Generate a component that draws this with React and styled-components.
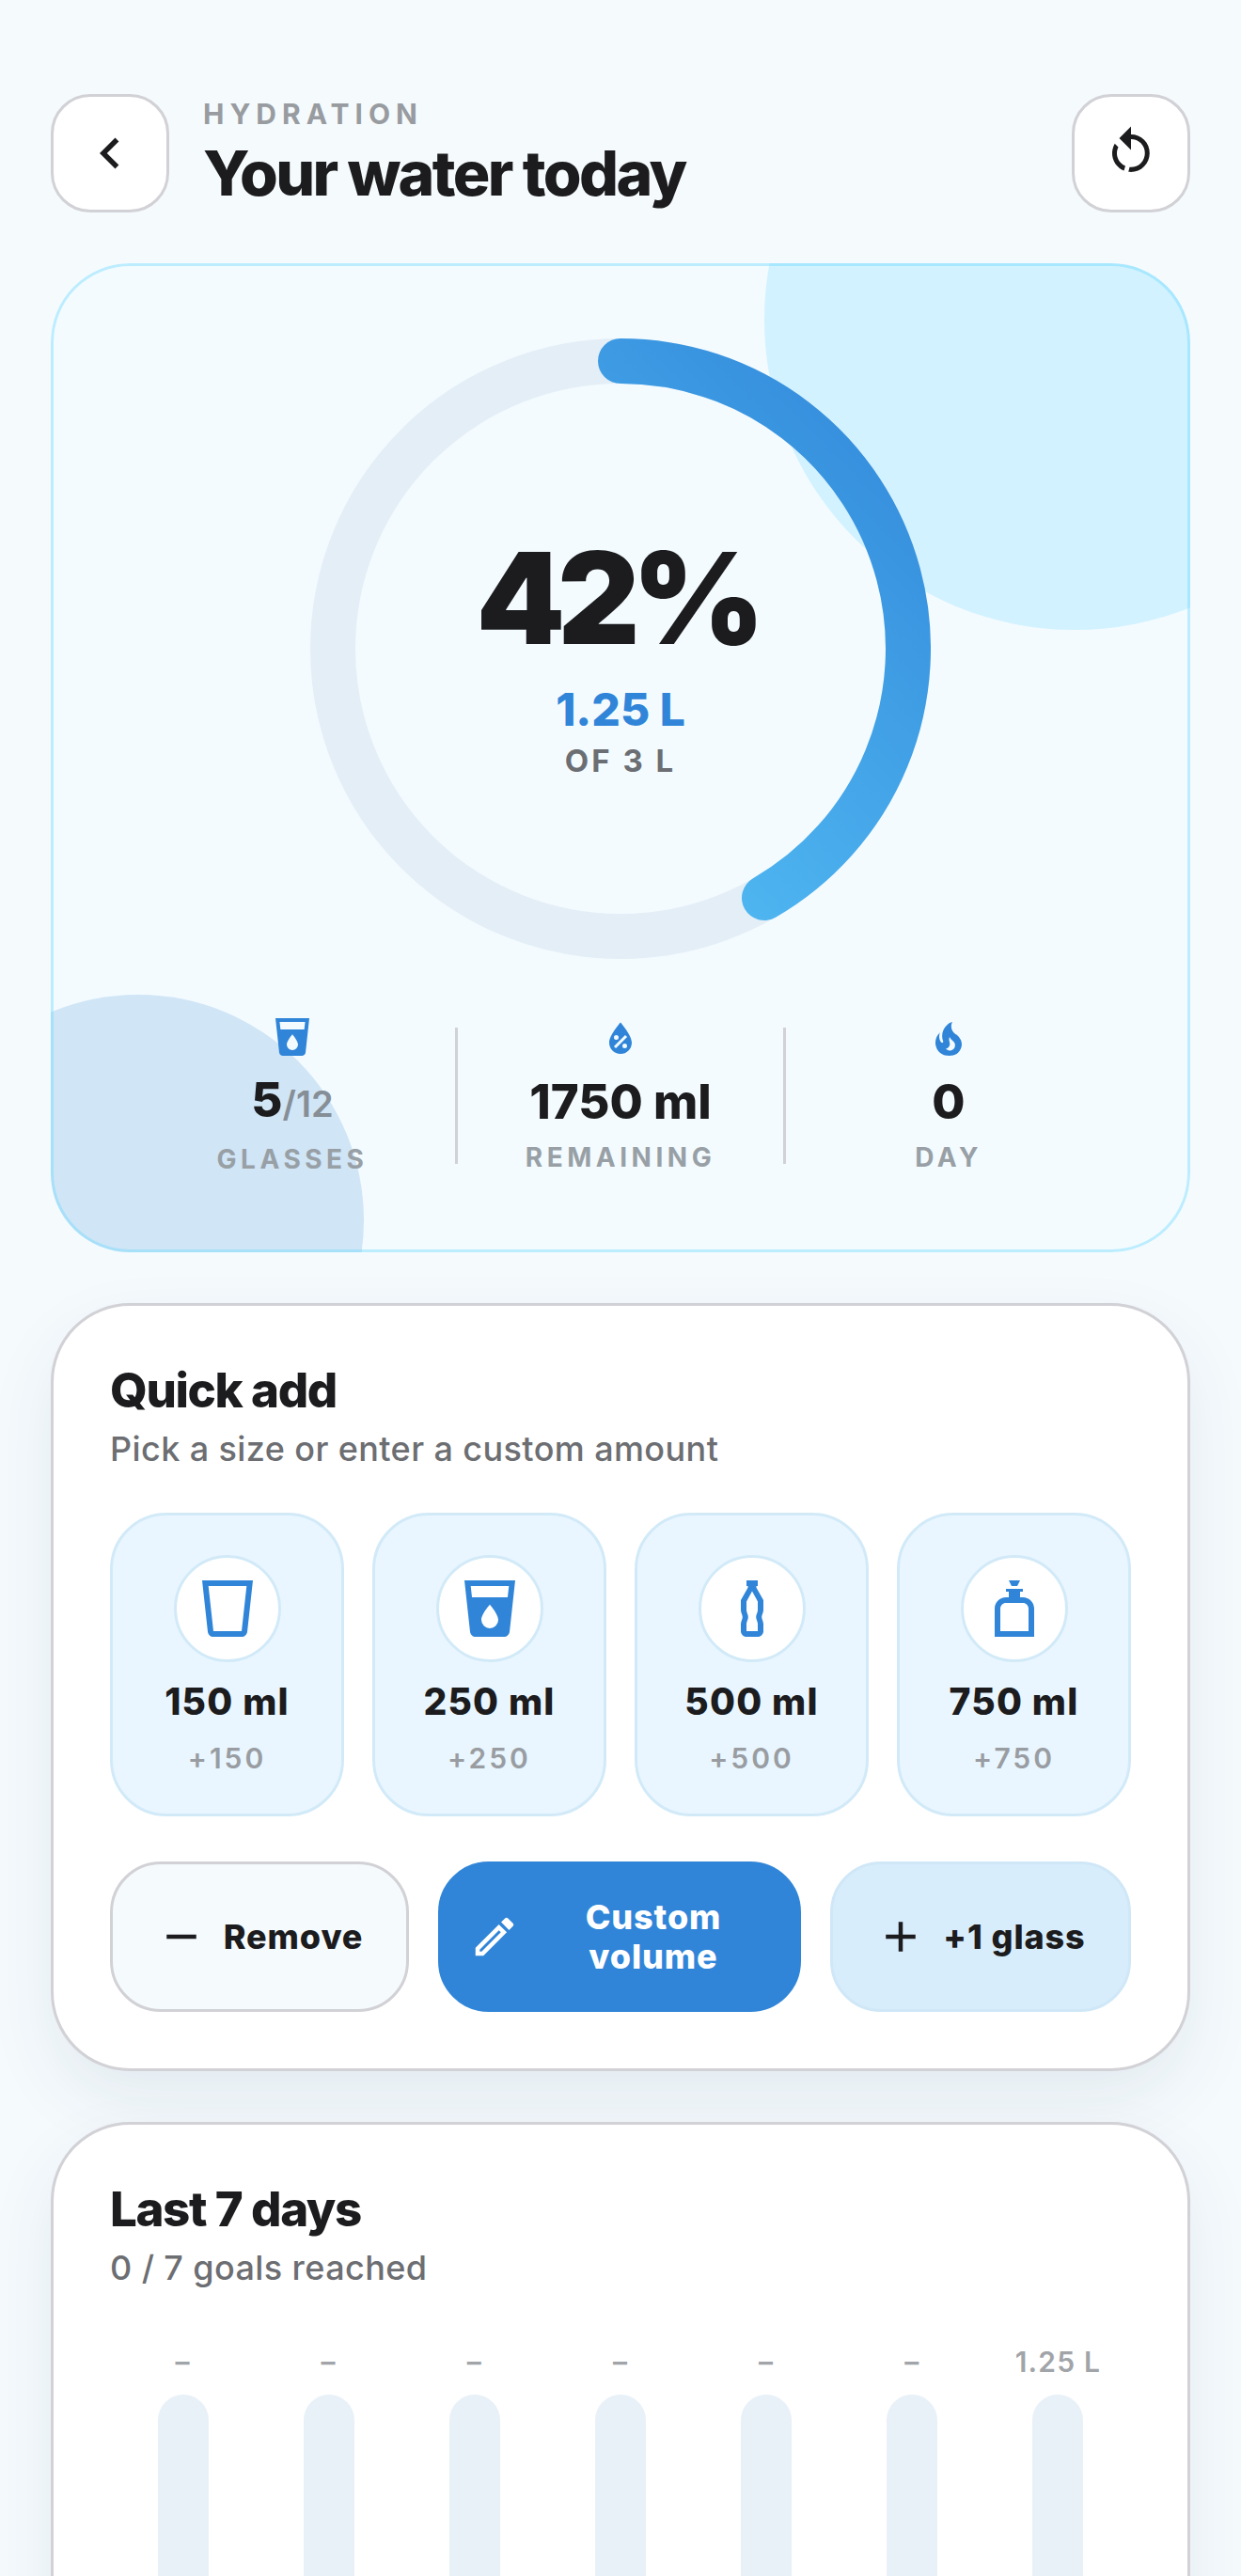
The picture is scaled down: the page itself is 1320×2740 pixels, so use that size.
import React from 'react'
import styled, { createGlobalStyle } from 'styled-components'

const GlobalStyle = createGlobalStyle`
  html, body { margin: 0; padding: 0; background: #f5fafd; }
  * { box-sizing: border-box; }
  body { font-family: Inter, "Liberation Sans", sans-serif; color: #1c1c1e; }
`

const Page = styled.div`
  height: 2740px;
  overflow: hidden;
  padding: 100px 54px 0;
  display: flex;
  flex-direction: column;
  gap: 54px;
  background: #f5fafd;
`

const Header = styled.header`
  display: flex;
  align-items: center;
  gap: 36px;
`
const IconButton = styled.button`
  width: 126px;
  height: 126px;
  flex: none;
  padding: 0;
  display: flex;
  align-items: center;
  justify-content: center;
  background: #fff;
  border: 3px solid #d1d1d6;
  border-radius: 42px;
  color: #1c1c1e;
`
const HeaderText = styled.div`
  flex: 1;
  display: flex;
  flex-direction: column;
  gap: 6px;
`
const Eyebrow = styled.div`
  font-size: 30px;
  line-height: 36px;
  font-weight: 700;
  letter-spacing: 6px;
  color: #989ca0;
`
const PageTitle = styled.h1`
  margin: 0;
  font-size: 66px;
  line-height: 78px;
  font-weight: 800;
  letter-spacing: -2.6px;
  color: #1c1c1e;
`

const Hero = styled.section`
  position: relative;
  overflow: hidden;
  flex: none;
  height: 1052px;
  padding: 80px 84px 0;
  background: #f3fbff;
  border-radius: 84px;
  &::after {
    content: '';
    position: absolute;
    inset: 0;
    border: 3px solid rgba(100, 215, 255, 0.38);
    border-radius: 84px;
  }
`
const Blob = styled.div`
  position: absolute;
  border-radius: 50%;
  width: ${p => p.$size}px;
  height: ${p => p.$size}px;
  background: ${p => p.$color};
  ${p => p.$top !== undefined && `top: ${p.$top}px;`}
  ${p => p.$bottom !== undefined && `bottom: ${p.$bottom}px;`}
  ${p => p.$left !== undefined && `left: ${p.$left}px;`}
  ${p => p.$right !== undefined && `right: ${p.$right}px;`}
`
const RingWrap = styled.div`
  position: relative;
  width: 660px;
  height: 660px;
  margin: 0 auto;
`
const RingSvg = styled.svg`
  display: block;
`
const RingCenter = styled.div`
  position: absolute;
  inset: 0;
  display: flex;
  flex-direction: column;
  align-items: center;
  justify-content: center;
  padding-top: 10px;
`
const Percent = styled.div`
  margin-left: -8px;
  font-size: 135px;
  line-height: 150px;
  font-weight: 900;
  letter-spacing: -8px;
  color: #1c1c1e;
`
const Amount = styled.div`
  margin-top: 17px;
  font-size: 48px;
  line-height: 54px;
  font-weight: 800;
  color: #3085d8;
`
const Goal = styled.div`
  margin-top: 6px;
  font-size: 33px;
  line-height: 42px;
  font-weight: 700;
  letter-spacing: 3px;
  color: #6b6e73;
`
const Stats = styled.div`
  position: relative;
  display: flex;
  align-items: center;
  margin-top: 59px;
`
const Stat = styled.div`
  flex: 1;
  display: flex;
  flex-direction: column;
  align-items: center;
  color: #3085d8;
`
const StatValue = styled.div`
  margin-top: 13px;
  font-size: 51px;
  line-height: 60px;
  font-weight: 800;
  color: #1c1c1e;
`
const StatOf = styled.span`
  font-size: 38px;
  font-weight: 600;
  color: #868e96;
`
const StatLabel = styled.div`
  margin-top: 11px;
  font-size: 28px;
  line-height: 36px;
  font-weight: 700;
  letter-spacing: 4.5px;
  color: #98a0a6;
`
const Divider = styled.div`
  flex: none;
  width: 3px;
  height: 145px;
  background: #d1d1d6;
`

const Card = styled.section`
  flex: none;
  padding: 60px;
  background: #fff;
  border: 3px solid #d1d1d6;
  border-radius: 84px;
  box-shadow: 0 30px 72px rgba(30, 60, 90, 0.08);
`
const CardTitle = styled.h2`
  margin: 0;
  font-size: 51px;
  line-height: 60px;
  font-weight: 800;
  letter-spacing: -1.4px;
  color: #1c1c1e;
`
const CardSub = styled.div`
  margin-top: 8px;
  font-size: 36px;
  line-height: 48px;
  font-weight: 500;
  letter-spacing: 0.4px;
  color: #6c6e72;
`
const Tiles = styled.div`
  display: grid;
  grid-template-columns: repeat(4, 1fr);
  gap: 30px;
  margin-top: 44px;
`
const Tile = styled.button`
  display: flex;
  flex-direction: column;
  align-items: center;
  padding: 42px 12px 41px;
  font-family: inherit;
  background: #e9f6ff;
  border: 3px solid #d2eaf8;
  border-radius: 60px;
`
const TileIcon = styled.div`
  width: 114px;
  height: 114px;
  display: flex;
  align-items: center;
  justify-content: center;
  background: #fff;
  border: 3px solid #d2eaf8;
  border-radius: 50%;
  color: #3085d8;
`
const TileName = styled.div`
  margin-top: 18px;
  font-size: 39px;
  line-height: 48px;
  font-weight: 800;
  letter-spacing: 1.2px;
  color: #1c1c1e;
`
const TilePlus = styled.div`
  margin-top: 18px;
  font-size: 30px;
  line-height: 36px;
  font-weight: 600;
  letter-spacing: 3px;
  color: #999da2;
`
const Actions = styled.div`
  display: grid;
  grid-template-columns: 318px 386px 1fr;
  gap: 31px;
  margin-top: 48px;
`
const variants = {
  ghost: 'background: #f5fafd; border-color: #d1d1d6; color: #1c1c1e;',
  primary: 'background: #3085d8; border-color: #3085d8; color: #fff;',
  soft: 'background: #d8edfc; border-color: #cfe7f7; color: #1c1c1e;'
}
const Action = styled.button`
  height: 160px;
  padding: 0 30px;
  display: flex;
  align-items: center;
  justify-content: center;
  gap: 18px;
  font-family: inherit;
  border: 3px solid;
  border-radius: 54px;
  ${p => variants[p.$kind]}
`
const ActionText = styled.span`
  font-size: 36px;
  line-height: 42px;
  font-weight: 800;
  letter-spacing: 0.9px;
  text-align: center;
  color: inherit;
  ${p => p.$grow && 'flex: 1;'}
`
const Chart = styled.div`
  display: grid;
  grid-template-columns: repeat(7, 1fr);
  margin-top: 58px;
`
const Day = styled.div`
  display: flex;
  flex-direction: column;
  align-items: center;
  gap: 17px;
`
const DayValue = styled.div`
  font-size: 30px;
  line-height: 36px;
  font-weight: 600;
  letter-spacing: 1.2px;
  color: #a1a4a8;
`
const DayBar = styled.div`
  width: 54px;
  height: 420px;
  border-radius: 27px;
  background: #e9f1f8;
`

const Icon = ({ d, size = 72 }) => (
  <svg width={size} height={size} viewBox="0 0 24 24" fill="currentColor" fillRule="evenodd" style={{ flex: 'none', display: 'block' }}>
    <path d={d} />
  </svg>
)

const paths = {
  back: 'M15.41,16.58L10.83,12L15.41,7.41L14,6L8,12L14,18L15.41,16.58Z',
  restart: 'M12,4C14.1,4 16.1,4.8 17.6,6.3C20.7,9.4 20.7,14.5 17.6,17.6C15.8,19.5 13.3,20.2 10.9,19.9L11.4,17.9C13.1,18.1 14.9,17.5 16.2,16.2C18.5,13.9 18.5,10.1 16.2,7.7C15.1,6.6 13.5,6 12,6V10.6L7,5.6L12,0.6V4M6.3,17.6C3.7,15 3.3,11 5.1,7.9L6.6,9.4C5.5,11.6 5.9,14.4 7.8,16.2C8.3,16.7 8.9,17.1 9.6,17.4L9,19.4C8,19 7.1,18.4 6.3,17.6Z',
  cupWater: 'M18.32,8H5.67L5.23,4H18.77M3,2L5,20.23C5.13,21.23 5.97,22 7,22H17C18,22 18.87,21.23 19,20.23L21,2H3M12,19A3,3 0 0,1 9,16C9,14 12,10.6 12,10.6C12,10.6 15,14 15,16A3,3 0 0,1 12,19Z',
  cup: 'M3,2L5,20.23C5.13,21.23 5.97,22 7,22H17C18,22 18.87,21.23 19,20.23L21,2H3ZM5.23,4H18.77L17,20H7L5.23,4Z',
  waterPercent: 'M12,3.25C12,3.25 6,10 6,14C6,17.32 8.69,20 12,20A6,6 0 0,0 18,14C18,10 12,3.25 12,3.25M14.47,9.97L15.53,11.03L9.53,17.03L8.47,15.97M9.75,10A1.25,1.25 0 0,1 11,11.25A1.25,1.25 0 0,1 9.75,12.5A1.25,1.25 0 0,1 8.5,11.25A1.25,1.25 0 0,1 9.75,10M14.25,14.5A1.25,1.25 0 0,1 15.5,15.75A1.25,1.25 0 0,1 14.25,17A1.25,1.25 0 0,1 13,15.75A1.25,1.25 0 0,1 14.25,14.5Z',
  fire: 'M17.66 11.2C17.43 10.9 17.15 10.64 16.89 10.38C16.22 9.78 15.46 9.35 14.82 8.72C13.33 7.26 13 4.85 13.95 3C13 3.23 12.17 3.75 11.46 4.32C8.87 6.4 7.85 10.07 9.07 13.22C9.11 13.32 9.15 13.42 9.15 13.55C9.15 13.77 9 13.97 8.8 14.05C8.57 14.15 8.33 14.09 8.14 13.93C8.08 13.88 8.04 13.83 8 13.76C6.87 12.33 6.69 10.28 7.45 8.64C5.78 10 4.87 12.3 5 14.47C5.06 14.97 5.12 15.47 5.29 15.97C5.43 16.57 5.7 17.17 6 17.7C7.08 19.43 8.95 20.67 10.96 20.92C13.1 21.19 15.39 20.8 17.03 19.32C18.86 17.66 19.5 15 18.56 12.72L18.43 12.46C18.22 12 17.66 11.2 17.66 11.2M14.5 17.5C14.22 17.74 13.76 18 13.4 18.1C12.28 18.5 11.16 17.94 10.5 17.28C11.69 17 12.4 16.12 12.61 15.23C12.78 14.43 12.46 13.77 12.33 13C12.21 12.26 12.23 11.63 12.5 10.94C12.69 11.32 12.89 11.7 13.13 12C13.9 13 15.11 13.44 15.37 14.8C15.41 14.94 15.43 15.08 15.43 15.23C15.46 16.05 15.1 16.95 14.5 17.5H14.5Z',
  bottle: 'M10 2H14V4H13.5V4.6L16 9V12.5C16 13.5 15.4 14.2 15.4 15C15.4 15.8 16 16.5 16 17.5V20C16 21.1 15.1 22 14 22H10C8.9 22 8 21.1 8 20V17.5C8 16.5 8.6 15.8 8.6 15C8.6 14.2 8 13.5 8 12.5V9L10.5 4.6V4H10V2ZM12 5.8L10 9.5V12.5C10 13.5 10.6 14 10.6 15C10.6 16 10 16.5 10 17.5V20H14V17.5C14 16.5 13.4 16 13.4 15C13.4 14 14 13.5 14 12.5V9.5L12 5.8Z',
  flask: 'M10 2H14L13 4H11L10 2ZM9 5H15V6H14V8H15C17.2 8 19 9.8 19 12V22H5V12C5 9.8 6.8 8 9 8H10V6H9V5ZM9 10C7.9 10 7 10.9 7 12V20H17V12C17 10.9 16.1 10 15 10H9Z',
  minus: 'M19,13H5V11H19V13Z',
  plus: 'M19,13H13V19H11V13H5V11H11V5H13V11H19V13Z',
  pencil: 'M14.06,9L15,9.94L5.92,19H5V18.08L14.06,9M17.66,3C17.41,3 17.15,3.1 16.96,3.29L15.13,5.12L18.88,8.87L20.71,7.04C21.1,6.65 21.1,6 20.71,5.63L18.37,3.29C18.17,3.09 17.92,3 17.66,3M14.06,6.19L3,17.25V21H6.75L17.81,9.94L14.06,6.19Z'
}

const tiles = [
  { ml: 150, icon: paths.cup },
  { ml: 250, icon: paths.cupWater },
  { ml: 500, icon: paths.bottle },
  { ml: 750, icon: paths.flask }
]
const week = ['–', '–', '–', '–', '–', '–', '1.25 L']

function Ring({ progress }) {
  const r = 306
  const angle = progress * Math.PI * 2
  const x = 330 + r * Math.sin(angle)
  const y = 330 - r * Math.cos(angle)
  return (
    <RingSvg width="660" height="660" viewBox="0 0 660 660">
      <defs>
        <linearGradient id="ring" gradientUnits="userSpaceOnUse" x1="660" y1="0" x2="0" y2="660">
          <stop offset="0" stopColor="#3085d8" />
          <stop offset="0.85" stopColor="#5ac8fa" />
        </linearGradient>
      </defs>
      <circle cx="330" cy="330" r={r} fill="none" stroke="#e4eef6" strokeWidth="48" />
      <path d={`M330 24A${r} ${r} 0 0 1 ${x} ${y}`} fill="none" stroke="url(#ring)" strokeWidth="48" strokeLinecap="round" />
    </RingSvg>
  )
}

export default function App() {
  return (
    <Page>
      <GlobalStyle />
      <Header>
        <IconButton><Icon d={paths.back} size={66} /></IconButton>
        <HeaderText>
          <Eyebrow>HYDRATION</Eyebrow>
          <PageTitle>Your water today</PageTitle>
        </HeaderText>
        <IconButton><Icon d={paths.restart} size={60} /></IconButton>
      </Header>

      <Hero>
        <Blob $size={660} $top={-270} $right={-207} $color="#d2f2ff" />
        <Blob $size={480} $bottom={-206} $left={-147} $color="#d0e5f6" />
        <RingWrap>
          <Ring progress={1.25 / 3} />
          <RingCenter>
            <Percent>42%</Percent>
            <Amount>1.25 L</Amount>
            <Goal>OF 3 L</Goal>
          </RingCenter>
        </RingWrap>
        <Stats>
          <Stat>
            <Icon d={paths.cupWater} size={48} />
            <StatValue>5<StatOf>/12</StatOf></StatValue>
            <StatLabel>GLASSES</StatLabel>
          </Stat>
          <Divider />
          <Stat>
            <Icon d={paths.waterPercent} size={48} />
            <StatValue>1750 ml</StatValue>
            <StatLabel>REMAINING</StatLabel>
          </Stat>
          <Divider />
          <Stat>
            <Icon d={paths.fire} size={48} />
            <StatValue>0</StatValue>
            <StatLabel>DAY</StatLabel>
          </Stat>
        </Stats>
      </Hero>

      <Card>
        <CardTitle>Quick add</CardTitle>
        <CardSub>Pick a size or enter a custom amount</CardSub>
        <Tiles>
          {tiles.map(t => (
            <Tile key={t.ml}>
              <TileIcon><Icon d={t.icon} /></TileIcon>
              <TileName>{t.ml} ml</TileName>
              <TilePlus>+{t.ml}</TilePlus>
            </Tile>
          ))}
        </Tiles>
        <Actions>
          <Action $kind="ghost">
            <Icon d={paths.minus} size={54} />
            <ActionText>Remove</ActionText>
          </Action>
          <Action $kind="primary">
            <Icon d={paths.pencil} size={54} />
            <ActionText $grow>Custom volume</ActionText>
          </Action>
          <Action $kind="soft">
            <Icon d={paths.plus} size={54} />
            <ActionText>+1 glass</ActionText>
          </Action>
        </Actions>
      </Card>

      <Card>
        <CardTitle>Last 7 days</CardTitle>
        <CardSub>0 / 7 goals reached</CardSub>
        <Chart>
          {week.map((v, i) => (
            <Day key={i}>
              <DayValue>{v}</DayValue>
              <DayBar />
            </Day>
          ))}
        </Chart>
      </Card>
    </Page>
  )
}
